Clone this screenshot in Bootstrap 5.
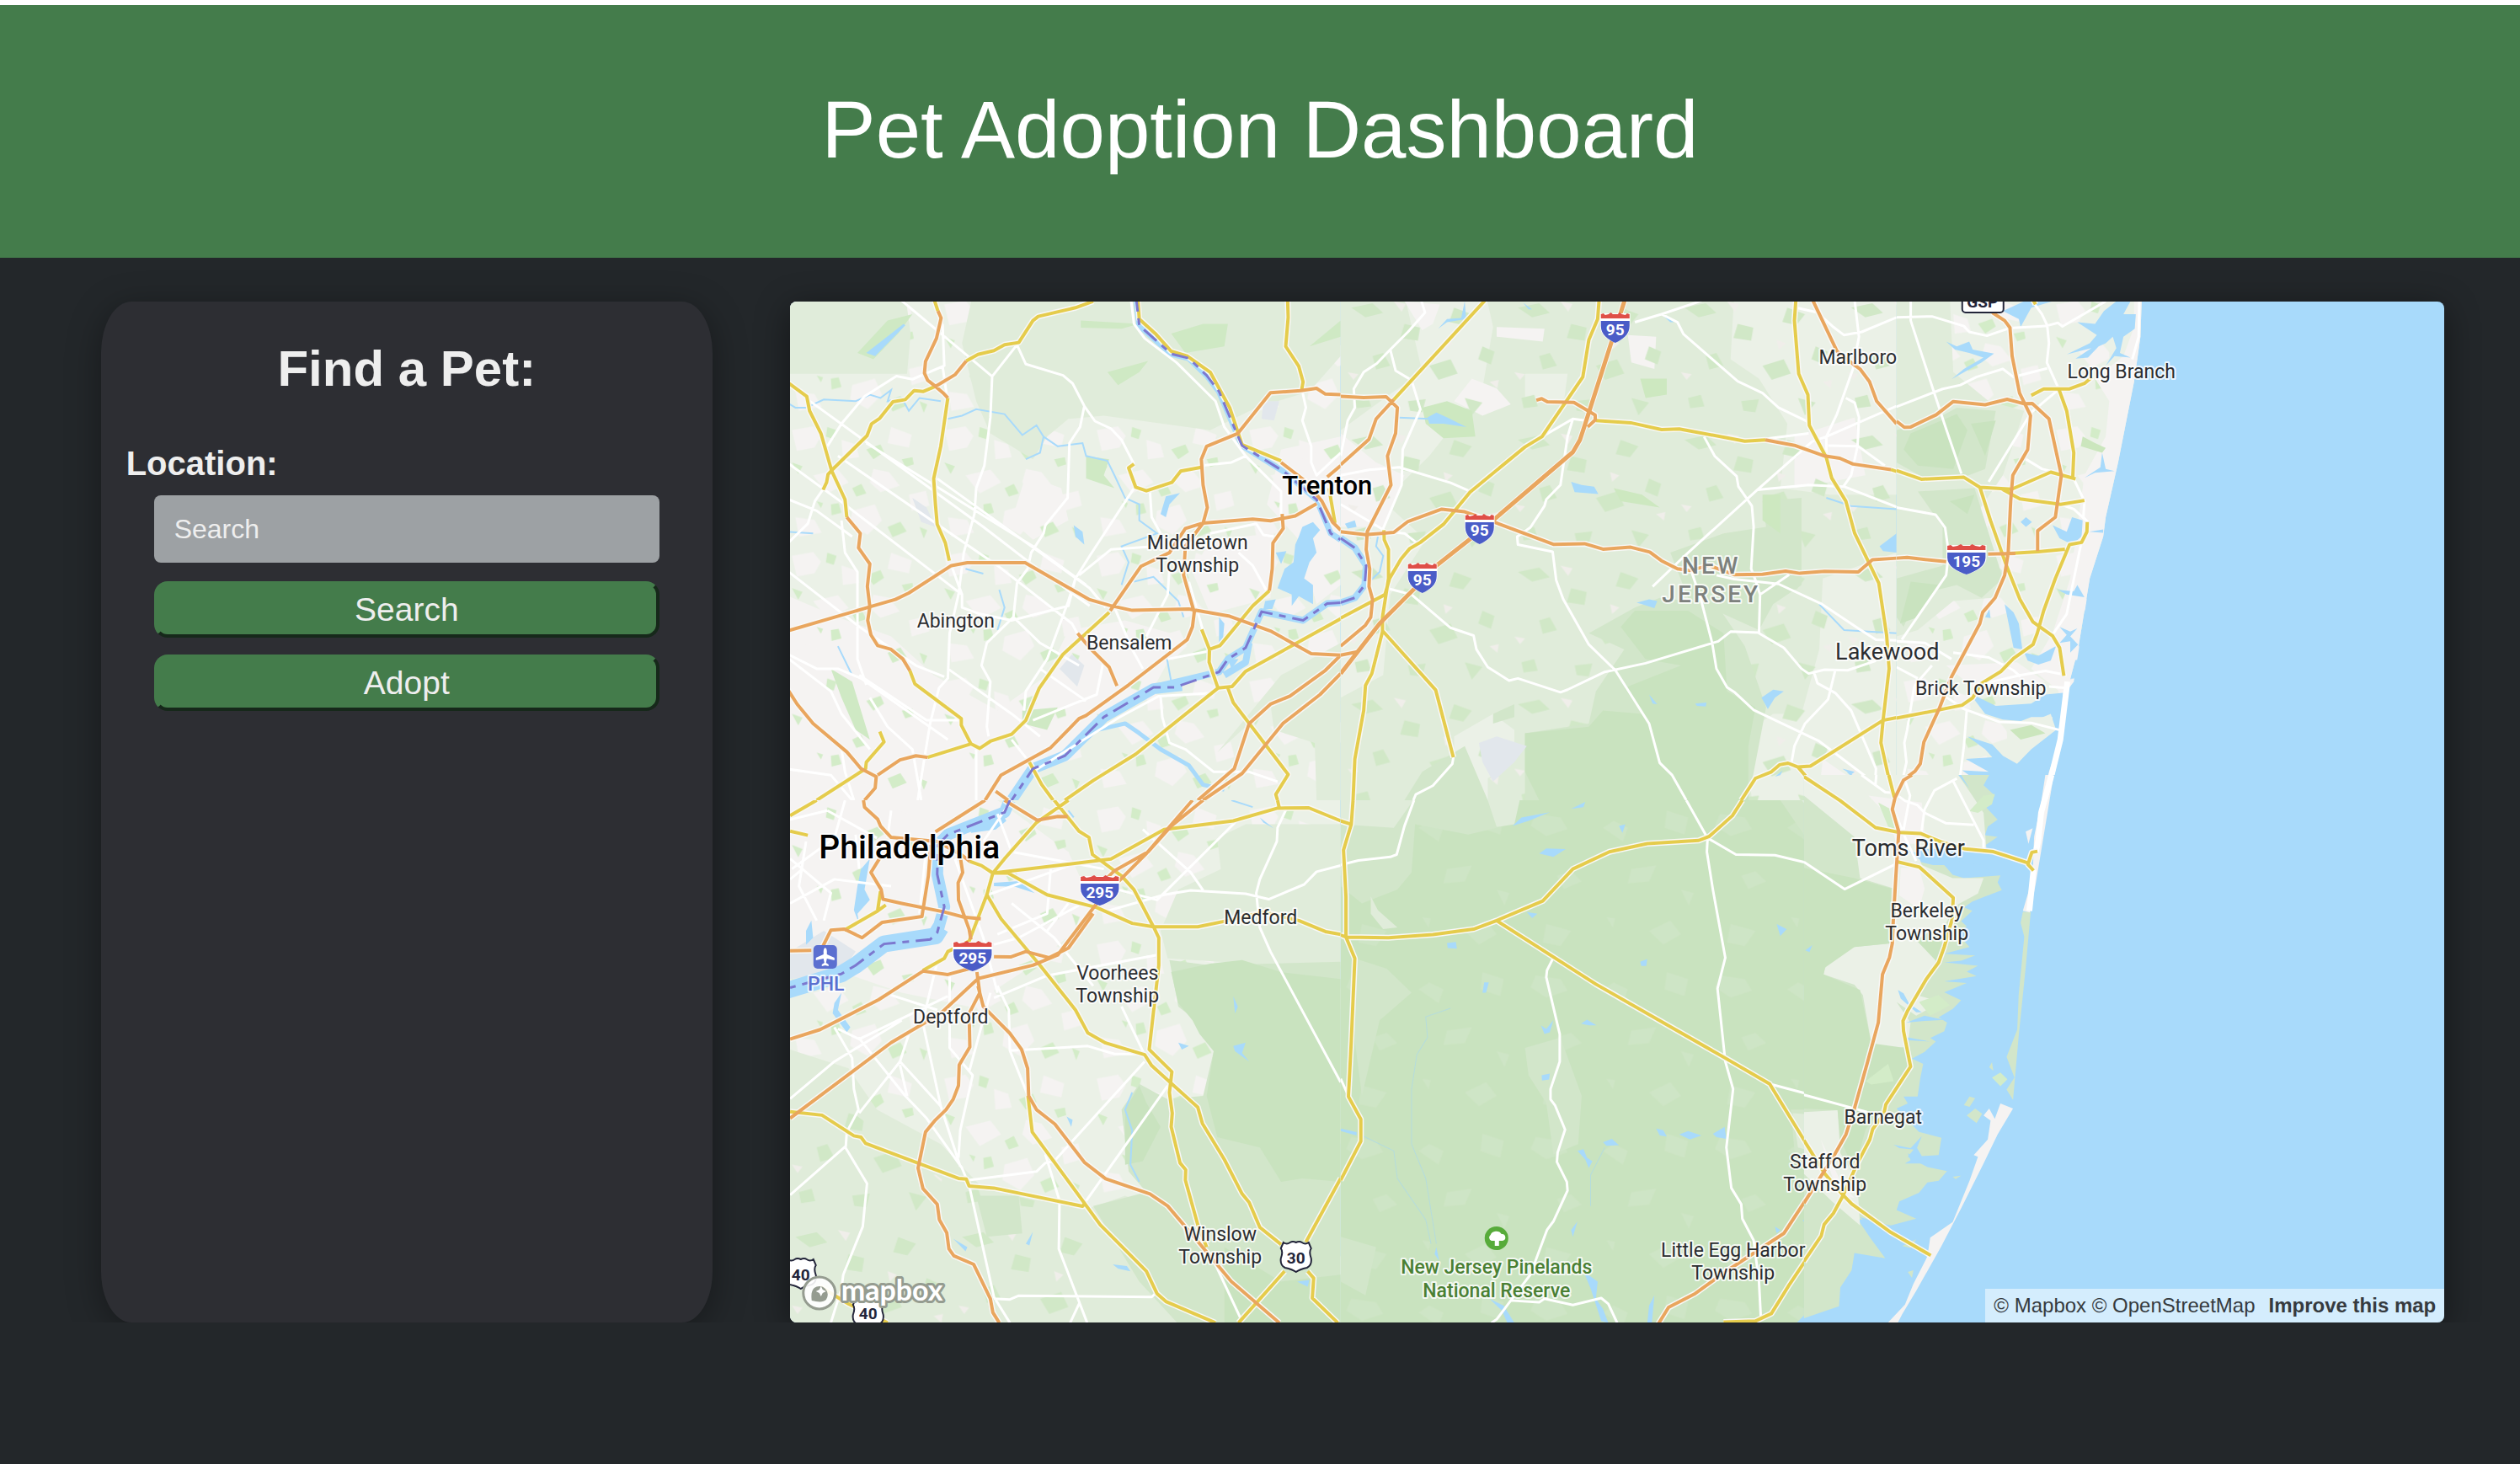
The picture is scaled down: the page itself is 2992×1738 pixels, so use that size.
<!DOCTYPE html>
<html lang="en">
<head>
<meta charset="utf-8">
<meta name="viewport" content="width=device-width, initial-scale=1">
<title>Pet Adoption Dashboard</title>
<link href="https://cdn.jsdelivr.net/npm/bootstrap@5.3.0/dist/css/bootstrap.min.css" rel="stylesheet">
<style>
  body { background: #23272a; color: #eee; font-family: "Liberation Sans", Arial, sans-serif; }
  .site-header { background: #447c4b; border-top: 6px solid #fff; padding: 90px 0 95px; }
  .site-title { font-size: 96px; line-height: 115px; font-weight: 400; color: #fff; }
  .dash { padding: 52px 3% 0 4%; gap: 3.3%; height: calc(100vh - 474px); min-height: 700px; }
  .find-panel { flex: 0 0 26.1%; background: #2d2e33; border-radius: 5%; padding: 44px 30px; box-shadow: 0 8px 40px rgba(0,0,0,.35); }
  .find-title { font-size: 60px; line-height: 72px; font-weight: 700; margin-bottom: 52px; }
  .find-label { font-size: 40px; line-height: 48px; font-weight: 700; margin-bottom: 14px; }
  .find-fields { padding: 0 33px; }
  .find-input, .find-input:focus { height: 80px; font-size: 32px; color: #eee; background: #9da1a4; border: 0; border-radius: 8px; padding: 0 24px; margin-bottom: 22px; }
  .find-input::placeholder { color: #eee; opacity: 1; }
  .find-btn { height: 67px; padding: 0; font-size: 39px; line-height: 56px; color: #eee; background: #447c4b; border: 4px solid #447c4b; border-right-color: #16281a; border-bottom-color: #16281a; border-radius: 16px; margin-bottom: 20px; }
  .find-btn:hover { background: #4d8a55; color: #fff; }
  .map-panel { flex: 1 1 0; background: #a8dafb; border-radius: 8px; box-shadow: 0 8px 40px rgba(0,0,0,.45); }
  .map-credit { right: 0; bottom: 0; height: 40px; padding: 0 10px; background: rgba(255,255,255,.5); font-size: 24px; line-height: 40px; white-space: nowrap; }
  .map-credit a { color: #363b3f; text-decoration: none; }
  .map-art path, .map-art polyline { vector-effect: non-scaling-stroke; }
  .lite { fill: #ebf1e7; } .field { fill: #e0ecda; } .scrub { fill: #d2e6ca; } .wood { fill: #c9e3bf; } .town { fill: #f5f3f2; }
  .park { fill: #d3ecc8; } .grey { fill: #e2e7ec; } .lake { fill: #a8dafb; }
  .brook { fill: none; stroke: #a8dafb; stroke-width: 2; }
  .river { fill: none; stroke: #a8dafb; stroke-linejoin: round; }
  .street { fill: none; stroke: #fff; stroke-width: 3; stroke-linejoin: round; }
  .edge { fill: none; stroke: #f8f8f6; stroke-width: 7; stroke-linejoin: round; }
  .major { fill: none; stroke: #e5cc4c; stroke-width: 4; stroke-linejoin: round; }
  .motor { fill: none; stroke: #e9a65e; stroke-width: 4; stroke-linejoin: round; }
  .border-line { fill: none; stroke: #7c78cf; stroke-width: 3; stroke-dasharray: 20 8 8 8; }
  .names { font-family: Roboto, sans-serif; font-size: 23px; fill: #2b2d30; text-anchor: middle; paint-order: stroke; stroke: #fff; stroke-opacity: .8; stroke-width: 4px; stroke-linejoin: round; }
  .mid-name { font-size: 27px; } .city { font-size: 31px; font-weight: 500; fill: #000; } .metro { font-size: 39px; font-weight: 500; fill: #000; }
  .state { font-size: 28px; font-weight: 500; fill: #7d817d; letter-spacing: 3px; } .reserve { fill: #4a8033; font-weight: 500; } .airport { fill: #5b6fd0; font-weight: 500; }
  .num { font: 700 19px Roboto, sans-serif; fill: #fff; text-anchor: middle; } .num-us { fill: #23253a; }
  .wordmark { font: 700 34px Lato, sans-serif; fill: #fff; stroke: #959c90; stroke-width: 6px; stroke-linejoin: round; paint-order: stroke; }
</style>
<script src="https://cdn.jsdelivr.net/npm/bootstrap@5.3.0/dist/js/bootstrap.bundle.min.js" defer></script>
</head>
<body>
<header class="site-header text-center">
  <h1 class="site-title m-0">Pet Adoption Dashboard</h1>
</header>
<main class="dash d-flex">
  <section class="find-panel">
    <h2 class="find-title text-center">Find a Pet:</h2>
    <form>
      <label class="find-label d-block" for="location">Location:</label>
      <div class="find-fields">
        <input class="form-control find-input" id="location" type="text" placeholder="Search">
        <button class="btn find-btn d-block w-100" type="button">Search</button>
        <button class="btn find-btn d-block w-100" type="button">Adopt</button>
      </div>
    </form>
  </section>
  <section class="map-panel position-relative overflow-hidden">
    <svg class="map-art d-block w-100 h-100" viewBox="936 358 1965 1212" preserveAspectRatio="xMidYMid slice" role="img" aria-label="Map of central New Jersey">
      <defs>
        <pattern id="suburb" width="430" height="390" patternUnits="userSpaceOnUse">
          <path class="town" d="M20,30l60,-12 22,30 -18,36 -50,10zM160,60l40,14 10,40 -46,6zM300,20l58,24 -8,40 -60,-14zM80,170l70,-18 30,40 -60,34zM250,150l44,10 30,42 -54,20 -30,-30zM350,230l48,-12 10,46 -50,16zM30,300l54,8 20,40 -64,12zM190,280l64,-20 20,50 -40,44 -50,-30z"/>
          <path class="park" d="M120,20l26,10 -8,28 -22,-8zM230,90l40,-16 10,24 -30,22zM20,130l30,12 -12,24zM190,210l26,-14 14,30 -28,10zM330,120l30,-6 4,22 -24,8zM130,260l22,-4 8,30 -28,8zM290,330l36,-16 18,30 -40,18zM380,330l22,10 -10,26zM90,250l18,6 -6,16z"/>
        </pattern>
        <pattern id="farm" width="470" height="410" patternUnits="userSpaceOnUse">
          <path fill="#d1e8c7" d="M30,40l60,-14 30,30 -50,14zM180,90l44,12 -6,40 -50,-8zM320,40l50,20 -24,34 -40,-10zM90,190l30,-10 20,40 -40,12zM250,220l60,-20 20,44 -54,20zM400,160l34,16 -10,40 -36,-16zM40,320l36,-10 10,36 -40,6zM190,330l50,-6 -10,40 -34,-4zM350,320l50,14 -30,40z"/>
          <path fill="#f0eeea" d="M150,20l34,8 -12,24zM290,140l26,10 -20,20zM20,240l30,6 -14,18zM420,270l26,-6 -4,26z"/>
        </pattern>
        <pattern id="pine" width="520" height="470" patternUnits="userSpaceOnUse">
          <path class="scrub" d="M30,40l70,10 20,34 -60,20 -44,-30zM220,80l30,-20 40,20 -14,40zM400,30l60,20 -10,50 -56,-20zM90,220l40,-14 30,30 -50,22zM300,200l70,-10 -20,46 -60,6zM440,260l36,10 -14,36zM60,360l70,20 -30,44 -50,-10zM230,340l24,4 -6,26zM350,380l60,-30 30,40 -50,30z"/>
        </pattern>
        <symbol id="interstate" viewBox="0 0 36 36" preserveAspectRatio="none">
          <path fill="#fff" d="M0,1h36v14c0,11 -8,17 -18,21C8,32 0,26 0,15z"/>
          <path fill="#df4f47" d="M1,7V2l3,-1 2,2 4,-1 3,-2 2,2h6l2,-2 3,2 4,1 2,-2 3,1v5z"/>
          <path fill="#4a5cc7" d="M1,10h34v6c0,10 -8,16 -17,20C9,32 1,26 1,16z"/>
        </symbol>
        <symbol id="us-route" viewBox="0 0 40 38">
          <path fill="#fff" stroke="#23253a" stroke-width="2" d="M5,2q4,3 8,0q3,-2 7,0q4,-2 7,0q4,3 8,0l3,7q-3,4 0,12q1,8 -5,11q-9,2 -13,5q-4,-3 -13,-5q-6,-3 -5,-11q3,-8 0,-12z"/>
        </symbol>
      </defs>

      <!-- North-west: Philadelphia suburbs to Trenton -->
      <svg x="930" y="350" width="660" height="600" viewBox="0 0 1568 1568" preserveAspectRatio="none">
        <defs>
          <path id="a-major" d="M870,20L820,40 715,67 700,80 660,148 620,155 590,173 545,185 512,205M425,284L390,300 365,297 340,325 305,332 268,383 245,400 232,437 132,545 122,557 118,582 108,605M0,265L62,315 70,360 102,430 132,545 170,635 175,690M423,0L423,20 432,50M460,320L440,470 420,570 425,650 430,712 453,770 464,825M353,1166L367,1207 498,1315 498,1335 525,1393 550,1407 580,1385 640,1363 680,1320 718,1220 785,1115 915,985M403,1435L525,1393M268,1355L280,1387 230,1450 228,1470 90,1568M995,0L1000,75 1045,120 1090,175 1135,190 1200,240 1255,350 1290,465 1400,515M1418,0L1420,70 1413,160 1450,222 1462,270 1458,295M985,525L970,537 990,597 1020,608 1092,582 1117,547 1175,535M1367,918L1320,965 1228,1088 1198,1100 1176,1038M1198,1100L1197,1140 1222,1220 1262,1215 1300,1168 1568,1005M1222,1220L990,1425 870,1507 790,1568M1250,1220L1265,1265 1420,1488 1385,1550 1390,1568M690,1450L725,1520 757,1568M1535,600L1552,708"/>
          <path id="a-motor" d="M432,50L441,72 428,135 397,207 394,243 403,265 425,284 448,306 460,320M425,284L480,248 512,205M0,1045L240,968 312,945 350,925 470,840 515,831 678,831 858,945 918,964 980,979 1140,975 1255,997 1370,1043 1485,1113 1568,1118M175,690L213,740 208,785 240,835 233,905 240,968 234,1010 243,1055 262,1088 300,1100 333,1130 353,1166M0,1210L35,1270 80,1330 175,1418 215,1470 258,1495 255,1530 225,1568M262,1490L325,1443 370,1430 403,1435M1568,310L1525,308 1500,290 1455,297 1370,304 1278,430 1190,470 1175,510 1180,590 1192,660 1180,708 1130,725 1085,800 1005,842 918,980M1180,708L1320,696 1370,701 1440,686 1500,648M1180,708L1130,780 1125,870 1155,985 1150,1030 1135,1070 970,1210 850,1305 830,1315 750,1405 610,1490 565,1568M1403,680L1406,725 1377,770 1375,850 1367,918M826,1050L860,1095 915,1155 937,1213M1400,520L1465,575 1515,640 1545,705 1568,730M1530,565L1568,530M1568,1118L1525,1165 1425,1245 1370,1270 1310,1330 1268,1470 1165,1568M1568,1175L1510,1240 1405,1330 1290,1485 1180,1568M595,1540L630,1568"/>
        </defs>
        <path class="lite" d="M0,0H1568V1568H0z"/>
        <path class="town" d="M0,930L150,1000 300,1060 420,1180 600,1290 740,1180 800,1040 960,1010 1120,1060 1050,1200 800,1400 620,1568H0zM680,560L780,600 800,700 700,760 640,700zM1200,760L1380,740 1370,940 1200,990 1150,860zM1400,480L1568,440V900L1500,960 1450,760 1360,650z"/>
        <path fill="url(#suburb)" d="M0,0H1568V1568H0z"/>
        <path class="field" d="M0,0H340L355,120 345,245 0,245zM530,0H1568V190L1480,300 1330,350 1200,420 900,375 800,385 740,440 700,510 580,430 540,330 500,150zM1220,1420L1400,1180 1568,1080V1568H1500L1495,1390 1380,1350 1370,1270z"/>
        <path fill="#cfe9c4" d="M205,180L290,80 360,60 320,120 250,200zM835,80L1000,90 950,105 835,102zM1090,120L1180,90 1250,90 1240,160 1130,180zM910,240L1025,205 1000,240 940,280zM1480,160L1568,80V130zM850,500L915,510 900,560 930,600 850,570zM130,1160L190,1200 240,1380 200,1350 160,1250zM670,1290L770,1280 740,1350 670,1330z"/>
        <path class="grey" d="M360,630L400,660 425,720 385,705zM775,1160L810,1115 845,1150 825,1215zM1350,330L1395,330 1380,390 1345,385z"/>
        <path class="brook" d="M0,330L30,350 60,350 110,325 200,330 240,310 270,320 300,295 290,330 330,320 350,360 380,320 440,330M460,385L500,375 540,355 620,370 670,435 710,405 730,440 720,490 680,510M730,440L770,470 840,460 850,500 910,515 930,560 960,630 1000,650 1000,700 1050,740 950,780 970,830 950,900M985,890L1040,875 1110,950 1125,1000M510,850L560,865M605,915L620,970 600,1040M0,735L80,740M150,1090L190,1180M1075,1110L1090,1200"/>
        <path class="lake" d="M230,180L335,90 340,95 255,190zM815,715L840,735 845,775 820,750zM1060,680L1075,625 1115,615 1085,650 1075,690zM1460,720L1490,705 1510,730 1490,755 1500,800 1480,830 1465,880 1490,900 1490,960 1450,935 1430,965 1430,930 1390,910 1410,850 1435,830 1440,775 1450,750zM1385,800L1415,795 1400,835zM1355,950L1385,945 1375,975 1350,975zM1225,1000L1240,1020 1235,1080 1225,1080zM1250,1130L1280,1130 1260,1160z"/>
        <path class="river" stroke-width="7" d="M990,0L1000,95 1090,183 1140,197 1190,250 1225,300 1275,430 1290,468 1410,550 1500,635 1540,740 1568,760"/>
        <path class="river" stroke-width="8" d="M1568,955L1530,958 1462,1010 1345,983 1330,1020 1300,1095 1250,1130 1225,1170 1040,1218M1310,1080L1300,1140 1240,1180"/>
        <path class="river" stroke-width="13" d="M1120,1212L1040,1222 900,1310 790,1430 700,1470 640,1568"/>
        <path class="river" stroke-width="5" d="M880,1350L960,1330 1000,1360 1060,1410 1140,1460 1180,1520 1240,1535"/>
        <path class="street" d="M310,0L585,253 655,155 680,215 785,250 812,275 845,345 875,392 920,415 950,450 985,525M585,253L580,380 563,530 540,600 535,680 505,800 490,930 465,1050 460,1190 435,1220 410,1330 395,1430 375,1568M845,345L833,410 803,460 798,630 735,715 730,740 695,800 685,850 655,895 645,1000 570,1080 555,1150 580,1200 570,1340 575,1370M0,515L175,655 500,930M65,325L560,720 690,830 860,965M150,500L600,840 810,1020 830,1060M0,630L90,670 190,750M0,850L210,1030 370,1150 450,1185M430,570L860,910 905,970M230,460L700,780 850,900M445,90L450,220 360,262 315,252 225,315 160,400 120,470M445,220L458,320M985,600L860,810 820,880 800,950 740,1130 680,1230 675,1290M830,870L920,790 1050,780M1030,610L1035,690 1060,740M975,0L985,90 1015,135 1105,210 1215,330 1240,410 1300,500 1400,610 1400,680M1175,530L1260,520 1300,500M1460,300L1470,350 1460,390 1485,470 1485,520 1500,560 1568,490M0,1110L90,1160 150,1160 215,1190 460,1380M240,1250L290,1340 360,1410 385,1568M1080,1130L1200,1105M1215,1235L1055,1245 945,1310 700,1480M1060,1245L1065,1310 1085,1390 1130,1410 1210,1480 1310,1480 1390,1510M160,1410L170,1480 195,1568M470,840L500,930 500,970 550,990 640,1010 800,965 820,880M110,600L85,640 65,710 0,780M160,700L170,800 205,860 205,1130 230,1210M645,1000L720,1080 830,1150M460,1160L640,1300 720,1370M720,1160L850,1260M500,1320L400,1320 210,1180M1085,850L1080,930 1020,1060M930,970L980,1100 1010,1160M1140,890L1195,1100M0,1470L130,1490 190,1568M640,1380L690,1450M540,1410L540,1568M1200,740L1330,710 1350,745 1380,750M1280,800L1320,840 1360,920M900,1130L880,1240 700,1320M0,1120L130,1230 160,1300 240,1410"/>
        <use href="#a-major" class="edge"/><use href="#a-motor" class="edge"/>
        <use href="#a-major" class="major"/><use href="#a-motor" class="motor"/>
        <path class="border-line" d="M990,0L1000,95 1090,183 1140,197 1190,250 1225,300 1275,430 1290,468 1410,550 1500,635 1540,740 1568,760M1568,955L1530,958 1462,1010 1345,983 1330,1020 1300,1095 1250,1130 1225,1170 1100,1218 1040,1218 900,1310 790,1430 700,1470 640,1568"/>
      </svg>

      <!-- North: Trenton to Freehold -->
      <svg x="1590" y="350" width="660" height="600" viewBox="0 0 1568 1568" preserveAspectRatio="none">
        <defs>
          <path id="b-major" d="M415,0L405,20 150,325M730,0L725,75 700,140 683,255 568,440 520,472 365,612 290,712 225,768 195,787 170,820 138,880 125,930 0,1003M122,730L123,760 135,790 135,880 118,1000 118,1045 88,1175 70,1212 65,1290 40,1440 35,1568M118,1042L268,1226 318,1435M720,390L818,397 905,418 955,416 1140,454 1198,450M1285,0L1280,80 1292,245 1318,310 1322,405 1370,505 1385,568 1425,640 1450,740 1518,895 1540,1055 1547,1160 1530,1320 1524,1390 1560,1568M1568,1312L1530,1320 1325,1462 1290,1465 1262,1453 1238,1458 1215,1480 1170,1500 1130,1568M1290,1465L1315,1497 1410,1568M1552,542L1568,548"/>
          <path id="b-motor" d="M0,315L65,319 128,316 160,350 155,430 132,500 142,590 75,735 72,790 82,850 80,905 90,945 85,1000 70,1025 0,1090M150,325L100,385 80,448 0,527M0,735L70,744 150,737 190,703 285,665 350,673 440,708 600,774 688,772 740,789 818,783 872,798 905,825 950,850 985,855 1040,840 1110,868 1190,867 1255,857 1295,864 1365,858 1460,860 1500,822 1568,817M552,327L567,322 583,332 658,334 718,373 718,388 697,410M1198,450L1280,467 1365,500 1408,507 1445,525 1552,542M1325,0L1333,20 1400,175 1440,210 1465,230 1492,270 1512,330 1568,400M0,1118L45,1108"/>
          <path id="b-turnpike" d="M806,0L760,160 690,400 675,450 655,488 440,690 380,745 270,840 205,915 110,1020 0,1175"/>
        </defs>
        <path class="field" d="M0,0H1568V1568H0z"/>
        <path class="lite" d="M180,0H410L430,100 400,290 250,500 120,640 240,760 140,930 120,1180 0,1250V420L150,300 230,240zM1110,0H1568V620L1380,620 1240,600 1260,400 1180,260 1100,200zM520,245L640,245 630,330 520,330zM1360,880L1568,800V1568H1160L1140,1360 1220,1300 1300,1300 1350,1100zM320,1370L430,1300 490,1350 490,1450 415,1500 415,1568H380L320,1480z"/>
        <path class="town" d="M0,430L100,520 180,560 120,720 0,720zM320,330L370,260 440,290 480,340 400,375zM440,100L575,105 570,145 440,130zM810,125L890,130 885,230 820,210zM1280,440L1450,380 1480,560 1280,600zM180,20L280,30 260,90 230,110zM1360,1440L1440,1500 1400,1568 1350,1540z"/>
        <path fill="url(#farm)" d="M0,0H1568V1568H0z"/>
        <path class="scrub" d="M700,1050L830,970 900,940 1060,960 1140,1090 1200,1280 1150,1568H520V1360L700,1330 720,1230 800,1100zM230,1480L350,1400 415,1568H180zM430,1300L490,1270 490,1310 430,1330z"/>
        <path class="wood" d="M790,1030L830,980 980,980 1080,1050 1090,1230 1170,1280 1150,1400 1150,1568H560L520,1480V1360L700,1340 740,1290 850,1300 800,1220 960,1150 860,1130z"/>
        <path class="scrub" d="M1190,640L1300,630 1300,900 1220,960 1180,1040 1100,1000 980,940 930,800 1080,740 1200,720z"/>
        <path fill="#cde8c0" d="M230,350L300,330 370,360 380,440 290,445 240,400zM1190,620L1240,620 1240,740 1190,700zM845,260L920,260 920,310 860,320zM770,600L850,620 900,660 790,640z"/>
        <path class="grey" d="M390,1390L440,1370 525,1400 490,1450 430,1510 400,1450z"/>
        <path class="lake" d="M245,380L270,365 300,380 355,410 290,400 250,400zM650,580L680,590 715,595 727,618 660,612zM905,60L940,85 930,85zM515,25L540,45 530,45zM275,105L300,75 340,72 350,20 354,75 300,85zM1520,780L1568,740V800L1530,795zM835,955L870,945 893,950 885,972 850,960zM1187,1250L1220,1225 1250,1230 1225,1250 1205,1285zM870,1240L893,1270 880,1268zM1000,1268L1032,1265 1030,1277 1005,1275zM1415,1470L1450,1480 1440,1488zM1225,1495L1247,1475 1240,1490zM12,710L40,700 45,720 20,725z"/>
        <path class="brook" d="M150,380L250,385M1370,630L1440,655 1568,665M1350,960L1420,1040 1568,1050M105,750L100,780 120,810 110,860 85,885M1430,1480L1520,1568"/>
        <path class="river" stroke-width="8" d="M0,755L40,785 72,840 68,900 40,940 0,955"/>
        <path class="street" d="M228,20L238,55 190,115 140,170 102,213 65,240 37,292 40,350 20,390 0,500M140,170L155,235 200,265 225,355 175,480 172,590 120,725M0,650L130,735 180,740 215,770M0,560L80,543 165,535 310,583 370,612M1060,0L1000,25 905,60 830,85M905,60L950,85 967,122 1120,268 1190,305 1235,350 1320,395M568,440L655,385 690,390M655,385L640,440 620,590 580,635 575,655 535,722 498,750 500,775 598,797 608,885 628,945 700,1085 775,1165 870,1330 900,1452 935,1490 975,1568M1025,440L1055,500 1117,563 1122,595 1160,655 1165,720 1158,850 1170,885 1183,930 1180,1050 1250,1095 1300,1160 1320,1175 1365,1163 1430,1165 1510,1135M1198,447L1320,430M1330,455L1175,605 975,805 880,905M1175,605L1320,590 1420,595 1568,658M990,860L1015,940 1048,1080 1060,1160 1090,1218 1110,1232 1165,1288 1350,1385 1500,1510 1540,1545M130,910L200,930 310,1033 375,1057 383,1100 415,1155 475,1197 500,1190 620,1233 640,1225 745,1170 860,1143 1065,1075 1100,1045 1180,1048M1060,870L1110,882 1235,897 1355,958 1460,1035 1510,1070 1568,1072M1183,930L1265,868M1448,0L1462,130 1445,230 1400,370 1370,440 1370,500M1285,40L1345,55 1390,100 1420,125 1470,115 1568,70M1330,455L1370,440 1568,345M1375,468L1460,470 1535,530M1425,320L1450,335 1462,380 1458,470 1440,560 1418,595M1395,1165L1375,1255 1310,1330 1280,1400 1272,1450M1335,1170L1345,1205 1395,1235 1440,1290 1510,1470 1508,1510M318,1435L315,1455 260,1523 212,1550 205,1568"/>
        <use href="#b-major" class="edge"/><use href="#b-motor" class="edge"/><use href="#b-turnpike" class="edge"/>
        <use href="#b-major" class="major"/><use href="#b-motor" class="motor"/><use href="#b-turnpike" class="motor" style="stroke-width:5px"/>
        <path class="border-line" d="M0,755L40,785 72,840 68,900 40,940 0,955"/>
      </svg>

      <!-- North-east: the shore -->
      <svg x="2250" y="350" width="660" height="600" viewBox="0 0 1568 1568" preserveAspectRatio="none">
        <defs>
          <path id="c-major" d="M0,545L70,572 190,566 235,597 325,603 435,550 505,571M497,570L500,490 480,360 458,293M380,312L415,292 488,292 530,275 552,255M298,603L348,633 463,650 530,638M235,597L265,700 310,840 348,945 385,1015 440,1058 460,1095 472,1182M538,705L537,735 522,768 488,775 448,880 415,980 397,1050 385,1085 330,1128 295,1168 240,1205 215,1250 185,1273 110,1290 0,1313M320,802L400,797 475,789M383,10L392,30"/>
          <path id="c-motor" d="M270,55L305,80 320,102 326,190 347,305 378,375 370,480 328,560 322,640 315,800 305,870 278,940 243,985 235,1020 155,1185 120,1285 77,1388 67,1455 52,1478 22,1502 0,1555M0,392L22,411 40,410 112,372 160,331 250,341 312,324 360,338 383,337 430,385 465,560 448,690 398,732 398,795M0,817L30,815 140,828M258,804L335,802"/>
        </defs>
        <path class="lite" d="M0,0H692L688,130 670,270 625,520 590,690 583,750 545,880 512,1100 488,1200 470,1360 430,1568H0z"/>
        <path fill="url(#suburb)" d="M0,0H600L600,500 500,1200 400,1350 180,1568H0z"/>
        <path class="field" d="M0,0H150L160,240 260,330 360,360 300,560 200,720 300,860 270,940 160,950 60,1040 0,1060z"/>
        <path class="scrub" d="M0,420L120,380 170,350 280,360 250,540 180,570 80,570 0,520zM60,610L220,600 300,880 240,940 170,900 60,930 20,1030 0,1000V880L130,840 130,720z"/>
        <path class="wood" d="M40,430L170,370 200,420 160,540 60,530 20,480zM210,400L280,390 250,500zM150,640L220,620 200,680zM40,890L120,900 60,1000 10,1020z"/>
        <path class="town" d="M692,0L688,130 670,270 625,520 590,690 583,750 545,880 512,1100 488,1200 470,1360 430,1568H410L440,1420 460,1230 380,1160 440,1050 490,880 530,560 590,440 600,330 560,260 640,190 670,100V0zM140,1150L340,1140 420,1200 240,1240z"/>
        <path class="lake" d="M510,85L560,90 585,50 620,20H660L640,60 675,60 672,105 640,130 630,180 660,195 615,190 590,220 620,165 610,130 590,150 570,160 540,195 505,198 550,165 480,185 545,150 565,125zM300,50L360,20H440L380,40 350,100 345,75zM140,145L170,160 205,145 215,170 275,182 240,210 155,262 190,230 245,195 205,180 165,170zM440,715L480,735 495,690 525,700 522,750 495,775 460,755zM350,705L365,690 382,705 365,720zM305,960L330,985 345,1020 355,1100 330,1095 318,1030zM250,1000L262,975 265,1003zM360,1110L400,1120 450,1090 435,1135 400,1147 370,1135zM530,568L575,535 580,490 590,540 615,547 560,552zM543,735L583,728 583,738zM455,915L500,920 510,900 530,938 480,930zM460,1030L490,1045 510,1035 490,1060 512,1085 490,1110 490,1075 460,1080 480,1055zM205,1235L280,1275 380,1268 420,1240 470,1235 463,1350 445,1430 430,1480 410,1568H175L190,1550 150,1500 230,1510 185,1475 260,1480 195,1440 270,1435 250,1410 200,1370 270,1395 300,1430 340,1455 380,1410 450,1350 435,1300 380,1325 300,1318 250,1300z"/>
        <path class="lite" d="M310,1340L380,1310 440,1310 435,1350 380,1400 345,1450 315,1430zM250,1562L270,1548 275,1560z"/>
        <path fill="#cbe6bd" d="M320,1350L380,1335 420,1360 350,1380zM525,440L560,460 590,475 580,490 520,470z"/>
        <path class="street" d="M0,70L100,67 190,97 205,115 255,127 320,103 420,97 455,87 468,98 590,20M40,0V80L105,300 135,400 183,555M0,347L130,292 180,280 225,255 300,230 330,255 425,228M390,30L410,60 425,95 430,150 424,210 458,293 380,365 260,580M365,510L410,540 440,548M500,571L530,640 527,690 540,705M463,650L500,665 535,700M520,775L480,990 440,1055M0,660L110,682 137,722 147,800 140,870 15,1070M0,1075L80,1080 155,1130M160,1110L260,1125 330,1165 350,1185M250,1205L350,1180 420,1167 480,1180M430,1215L480,1220M110,1225L190,1285 290,1325 380,1328 460,1350M50,1215L30,1350 22,1390 28,1450 20,1490 40,1550M198,1290L190,1400 180,1490 110,1540 90,1568M0,1155L60,1190M100,1150L60,1200 50,1215M685,0L683,130 665,200"/>
        <path class="street" style="stroke-width:7px" d="M482,1200L462,1380 420,1568"/>
        <use href="#c-major" class="edge"/><use href="#c-motor" class="edge"/>
        <use href="#c-major" class="major"/><use href="#c-motor" class="motor"/>
      </svg>

      <!-- South-west: Philadelphia to Winslow -->
      <svg x="930" y="950" width="660" height="640" viewBox="0 0 1568 1568" preserveAspectRatio="none">
        <defs>
          <path id="d-major" d="M15,45L90,0M15,90L65,102M168,378L262,322 285,305M262,320L270,265M800,0L710,65 620,170 587,212 570,275 520,410 460,440 450,460 390,495M760,0L830,90 858,108 868,158 950,220 985,260 1040,368 1055,400 1055,480 1028,725 1092,790 1085,850 1093,910 1090,950 1115,1055 1131,1075 1130,1105 1165,1235 1190,1300M522,178L555,190 587,212 920,171 1070,85 1265,60 1390,23 1478,22 1568,60M587,212L630,212 740,275 880,312 980,358 1040,368 1165,368 1250,350 1350,325 1450,350 1525,382 1568,390M570,275L610,345 720,480 820,610 855,677 905,706 1015,740 1035,772 1165,893 1178,940 1240,1045 1290,1145 1310,1170 1340,1242 1400,1292M1568,1100L1470,1285M1410,1370L1280,1520M1475,1370L1492,1390 1488,1448 1560,1520M15,906L105,916 195,976 215,980 228,998 490,1100 512,1102 520,1122 590,1128 840,1181 848,1170M686,860L698,965 890,1235 1020,1370 1050,1435 1075,1458 1215,1520M100,1415L180,1465 290,1520M1390,0L1395,23"/>
          <path id="d-motor" d="M222,0L225,20 262,55 270,75 300,108 430,120 500,160 522,178M565,0L425,92M270,165L243,210 272,260 277,288 330,300 450,325 505,340 553,345M412,130L405,220 387,338 275,355 218,400 168,375 130,378 105,430M15,438L75,437M495,165L502,210 489,240 490,290 520,375 525,405M620,0L712,58 770,47 798,48M1150,0L1020,155 880,300 770,450 700,480 540,520M1180,0L1090,75 1025,150 930,205 910,225M870,330L800,430 745,458 680,440 637,456 590,455M15,695L100,667 265,580 390,497 460,507 520,490M15,925L300,705 440,620 542,522M542,500L550,560 520,620 522,718 492,770 490,830 475,870 455,900 425,930 397,965 376,1070 390,1130 430,1175 436,1220 457,1258 463,1305 477,1325 533,1350 580,1450 587,1490 605,1520M545,540L560,600 635,678 668,725 685,780 688,860 710,900 762,942 845,1053 905,1101 1030,1145 1080,1180 1150,1265 1260,1400 1395,1520"/>
        </defs>
        <path class="lite" d="M0,0H1568V1568H0z"/>
        <path class="town" d="M0,0H600L800,150 880,330 700,480 520,600 330,560 160,500 0,420z"/>
        <path fill="url(#suburb)" d="M0,0H1568V1568H0z"/>
        <path class="field" d="M0,720L180,780 260,900 440,1000 560,1130 850,1190 960,1150 1200,1250V1568H0zM1220,110L1300,70H1568V480H1380L1080,460 1060,380 1110,260 1230,200z"/>
        <path fill="url(#farm)" d="M0,900L180,900 440,1100 850,1200V1568H0z"/>
        <path class="scrub" d="M1085,465L1200,480 1568,470V1568H1150L1000,1400 870,1180 1020,1140 970,1080 950,900 1000,825 1080,870 1180,860 1210,730 1160,640 1110,600zM540,1150L660,1150 670,1260 570,1270z"/>
        <path class="wood" d="M1090,500L1200,475 1290,465 1400,500 1568,520V1110L1460,1100 1400,1110 1340,1010 1220,980 1190,860 1210,730 1170,680 1150,640 1110,590zM960,900L1000,830 1020,880 1060,950 1010,1050 960,1060zM1240,1300L1400,1400 1568,1380V1568H1240z"/>
        <path class="grey" d="M15,440L110,380 200,440 160,500 15,520z"/>
        <path class="lake" d="M590,240L660,235 705,270 650,252 590,250zM205,250L215,200 240,170 225,260 240,290 205,330 210,360 195,320zM1110,705L1140,715 1120,725zM1265,715L1300,705 1290,735 1310,760 1270,730zM795,920L812,930 808,950zM925,1350L965,1355 975,1370 940,1362zM680,1290L700,1255 690,1295zM475,1275L515,1300 510,1312zM1265,570L1278,600 1270,620zM1340,50L1380,82 1350,65zM1445,1400L1480,1395 1475,1415zM60,380L75,350 80,400 60,420zM140,590L160,560 150,610 185,660 175,675 135,620zM540,50l70,-15 15,25 -30,25 -70,10z"/>
        <path class="brook" d="M980,850L960,900 980,960 975,1060 1000,1110M800,30L815,50M1260,0L1320,20"/>
        <path class="river" stroke-width="14" d="M635,0L620,35 460,100 432,130 430,215 450,310 430,385"/>
        <path class="river" stroke-width="20" d="M440,370L425,395 280,418 200,480 160,505 0,555"/>
        <path class="street" d="M1415,25L1390,80 1388,120 1340,230 1330,270 1340,370 1370,440 1568,820M1568,190L1500,208 1465,245 1365,288 1300,272 1145,262 1070,275 900,325M1010,85L1145,210 1180,262M1270,65L1050,290 940,260M15,1148L170,1008 232,1115 220,1240 165,1380 160,1420 130,1520M15,868L140,760 330,640M140,660L190,750 195,840 208,900 175,965 172,1008M208,690L340,860 400,925 500,1070 520,1120 590,1445 635,1520M390,650L440,890 495,1065M325,760L440,890M350,680L325,760 210,910M465,500V720L530,800 495,960 490,1040M520,790L580,560M325,770L345,860M520,1105L710,1080 735,1055 760,1050 1015,760M735,1030L775,1165 773,1305 853,1520M850,1165L1080,830M635,728L855,715 930,738 1010,738M600,540L632,610 635,728 690,870M590,1450L635,1452 660,1441 1035,1445 1050,1430M830,1465L805,1520M950,600L1015,740M1210,1340L1285,1505M150,665L210,695 460,570M15,170L130,270 110,350M60,120L40,250 90,350M120,30L260,110M15,300L140,230 300,250M170,0L140,110 20,200M400,130L380,330M480,170L560,400 600,560M600,40L640,150 900,200M640,300L760,400 870,540M600,390L740,330 750,200M560,280L830,180M430,470L390,640M280,560L430,610M590,575L740,510 1050,450M800,300L740,380M0,60L120,30M560,120L640,0M300,30L290,110M15,230L50,200M590,420L660,400 840,300M200,100L210,200"/>
        <use href="#d-major" class="edge"/><use href="#d-motor" class="edge"/>
        <use href="#d-major" class="major"/><use href="#d-motor" class="motor"/>
        <path class="border-line" d="M635,0L620,35 460,100 432,130 430,215 450,310 430,385 410,405 280,418 200,480 160,505 15,545"/>
      </svg>

      <!-- South: Pinelands -->
      <svg x="1590" y="950" width="660" height="640" viewBox="0 0 1568 1568" preserveAspectRatio="none">
        <defs>
          <path id="e-major" d="M0,60L30,70 8,145 15,280 15,398 40,460 30,700 22,862 57,928 57,992 0,1105M35,0L30,70M0,392L15,398 135,400 260,391 375,375 440,350 570,293 655,200 758,150 865,126 1010,117 1040,105 1105,45 1133,0M440,350L720,535 1085,750 1210,825 1320,1010M1320,1325L1265,1410 1215,1493 1170,1515 1080,1518"/>
          <path id="e-motor" d="M1320,1150L1250,1260 1080,1375 1000,1435 925,1475 895,1525"/>
        </defs>
        <path class="wood" d="M0,0H1568V1568H0z"/>
        <path fill="url(#pine)" fill-opacity=".6" d="M0,0H1568V1568H0z"/>
        <path class="scrub" d="M0,0H420L440,80 360,100 210,70 200,210 160,260 60,300 0,250zM40,460L130,490 200,560 110,640 60,860 40,700zM520,720L620,690 680,860 670,1000 600,1030 580,880 530,800zM1240,0H1400V200L1320,120zM1270,900L1400,900 1400,1060 1280,1020zM0,1270L100,1300 70,1440 0,1400z"/>
        <path class="field" d="M0,0H205L150,80 0,70zM415,0H505L490,70 440,78zM85,280L105,320 160,370 120,375 85,330zM1300,0H1400V120zM1275,910L1400,920V1040L1290,1010z"/>
        <path class="lake" d="M485,75L510,50 590,35 530,60zM650,25L690,5 685,20zM785,75L803,70 795,95zM560,155L580,140 635,142 600,165zM525,325L555,330 540,343zM300,415L325,412 328,432 302,430zM400,560L405,530 418,530 410,560zM565,655L580,665 600,640 590,675 575,680zM678,650L695,638 722,655 700,655zM567,800L590,795 588,812 568,815zM845,470L865,462 862,482 848,482zM890,955L910,960 920,978 900,975zM955,972L980,962 1018,975 985,987zM1050,970L1083,950 1088,985 1060,980zM740,995L765,985 785,1003 750,1005zM668,1020L685,1015 695,1040 710,1050 700,1070 690,1045zM1230,360L1258,375 1240,395zM1310,435L1325,420 1325,440zM0,955L45,965 45,975 0,962zM650,1250L668,1225 655,1270zM270,1300L278,1340 265,1320zM685,1370L725,1400 720,1450 740,1480 755,1520 735,1515 705,1420zM865,1520L870,1470 885,1440 878,1520zM420,1450L460,1470 490,1520H470L455,1485zM1225,1240L1240,1250 1230,1260zM1302,1222L1325,1218 1320,1235zM1240,1568L1320,1485V1568z"/>
        <path fill="none" stroke="#b5dcdc" stroke-width="1" d="M310,605L240,630 245,690 215,740 200,840 200,1000 240,1100 270,1290M60,975L150,1020 160,1100 240,1220 255,1290M745,1010L705,1090 705,1180"/>
        <path class="street" d="M207,0L180,75 158,158 140,165 50,175 0,188M975,0L1035,110 1033,150 1050,260 1085,458 1063,548 1085,760 1107,840 1088,1010 1102,1128 1130,1175 1133,1217 1165,1280 1180,1400 1185,1500M1035,110L1115,158 1225,160 1307,180 1420,260M598,462L582,495 580,515 618,680 618,760 592,840 592,870 605,888 633,958 612,1025 610,1052 638,1110 640,1135 600,1225 582,1250 535,1380 480,1455 440,1510 425,1520M480,1455L560,1460 575,1450 655,1468 735,1448 755,1465 780,1520M1210,825L1320,855M0,810L22,860"/>
        <use href="#e-major" class="edge"/><use href="#e-motor" class="edge"/>
        <use href="#e-major" class="major"/><use href="#e-motor" class="motor"/>
      </svg>

      <!-- South-east: Barnegat Bay and Long Beach Island -->
      <svg x="2140" y="920" width="300" height="650" viewBox="0 0 900 1592" preserveAspectRatio="none">
        <defs>
          <path id="g-major" d="M0,5L130,75 255,153 340,167 415,170 490,195 575,215 675,223 795,255M832,222L812,225 798,260 818,278M335,253L412,268 532,357 528,420 500,500 480,545 435,595 370,685 353,715 355,745 380,848 292,958 285,985 245,1030 235,1060 190,1130 140,1222 105,1275 72,1307 62,1340 0,1415M0,1062L75,1160 140,1222 170,1247 310,1330 452,1397M302,0L322,65"/>
          <path id="g-motor" d="M385,0L355,15 325,65 315,100 338,165 328,290 318,430 315,490 305,530 280,580 265,720 225,840 180,970 150,1045 105,1110 70,1155 0,1245"/>
        </defs>
        <path class="lake" d="M0,0H900V1592H0z"/>
        <path class="scrub" d="M0,0H550L590,40 560,0H660L640,30 680,60 650,95 690,130 655,150 645,175 690,180 645,205 640,225 500,205 400,215 400,250 460,262 500,262 530,290 570,300 700,292 690,312 705,335 640,355 600,368 570,385 600,395 560,425 580,440 545,460 590,500 500,520 610,525 560,540 500,545 620,555 580,572 615,585 500,600 580,605 500,632 560,655 530,680 480,705 510,720 500,745 450,765 470,775 430,805 385,825 425,840 415,880 405,935 355,935 370,955 330,970 410,1038 490,1055 480,1105 420,1108 400,1080 370,1110 440,1140 510,1152 480,1180 440,1185 410,1215 340,1240 330,1265 400,1290 310,1310 190,1290 240,1350 290,1405 180,1390 170,1440 130,1490 125,1545 0,1580z"/>
        <path class="lite" d="M0,0H550L600,60 640,110 650,215 400,215 420,262 530,300 640,300 620,345 540,380 500,440 480,520 440,600 400,640 490,660 400,700 330,660 380,720 370,790 270,800 240,780 210,640 180,610 70,580 90,520 180,500 300,490 320,330 200,300 180,180 0,60zM0,980L120,975 130,1100 190,1180 200,1310 100,1240 0,1160z"/>
        <path class="town" d="M230,60L420,80 430,170 400,200 330,200 300,120zM345,270L410,270 430,330 410,390 340,350zM60,1060L130,1180 180,1230 120,1220z"/>
        <path class="wood" d="M0,270L180,300 310,330 310,490 180,500 75,560 70,580 200,625 240,780 370,795 370,850 290,955 220,1030 180,1150 130,1060 120,975 0,970zM400,480L460,450 500,500 470,540z"/>
        <path class="park" d="M265,80L310,100 330,160 300,150zM590,105L640,60 680,55 670,85 620,110zM670,880L700,865 725,885 700,905zM410,660L480,640 520,670 450,700zM220,890L300,840 320,890 240,900z"/>
        <path class="lake" d="M335,625L355,635 375,665 420,690 400,690 345,650zM365,720L430,700 500,712 430,715zM350,770L450,775 360,762zM320,1075L380,1085 420,1050 400,1090 340,1085zM360,1130L380,1120 370,1100 420,1130zM200,1285L260,1300 310,1330 290,1345 230,1310zM370,220L440,235 640,262 670,290 560,292 500,262 420,250zM5,510L30,495 20,515z"/>
        <path class="scrub" d="M570,960L590,935 610,940 590,965zM580,990L610,970 635,985 615,1012zM660,850L670,835 675,860zM530,1168L560,1165 540,1175zM370,1445L390,1440 385,1462zM350,1370L400,1350 380,1375zM780,398H808L790,560 765,760 745,945 722,915 750,880 722,820 760,740 765,640 785,470 772,430z"/>
        <path class="town" d="M860,0H890L825,320 805,400 780,395 800,340 815,290 820,180 845,80zM790,165L815,155 800,200zM700,955L745,970 690,1045 640,1130 560,1260 490,1370 400,1500 350,1568 335,1592H300L360,1540 390,1480 440,1400 450,1345 530,1300 560,1240 590,1180 620,1110 605,1105 655,1060 665,1005 640,990 660,970 680,1000z"/>
        <path class="street" d="M205,0L290,50 320,52 360,75 405,88 430,110 505,140 605,145M530,15L640,190 640,215M545,10L465,45 430,100 418,170M362,20L378,60 355,160M325,110L365,190 400,250M258,0L255,28M0,253L145,332 325,260M0,930L225,980"/>
        <path class="street" style="stroke-width:7px" d="M882,0L845,110 835,190 826,225M818,275L803,395"/>
        <use href="#g-major" class="edge"/><use href="#g-motor" class="edge"/>
        <use href="#g-major" class="major"/><use href="#g-motor" class="motor"/>
      </svg>

      <g class="names">
        <text class="city" x="1574" y="587">Trenton</text>
        <text class="metro" x="1078" y="1019">Philadelphia</text>
        <text class="mid-name" x="2239" y="783">Lakewood</text>
        <text class="mid-name" x="2264" y="1016">Toms River</text>
        <text class="state" x="2030" y="681">NEW</text><text class="state" x="2030" y="715">JERSEY</text>
        <text x="1420" y="652">Middletown</text><text x="1420" y="679">Township</text>
        <text x="1133" y="745">Abington</text><text x="1339" y="771">Bensalem</text>
        <text x="2204" y="432">Marlboro</text><text x="2517" y="449">Long Branch</text><text x="2350" y="825">Brick Township</text>
        <text x="2286" y="1089">Berkeley</text><text x="2286" y="1116">Township</text>
        <text x="2234" y="1334">Barnegat</text>
        <text x="2165" y="1387">Stafford</text><text x="2165" y="1414">Township</text>
        <text x="2056" y="1492">Little Egg Harbor</text><text x="2056" y="1519">Township</text>
        <text x="1447" y="1473">Winslow</text><text x="1447" y="1500">Township</text>
        <text x="1325" y="1163">Voorhees</text><text x="1325" y="1190">Township</text>
        <text x="1127" y="1215">Deptford</text><text x="1495" y="1097">Medford</text>
        <text class="reserve" x="1775" y="1512">New Jersey Pinelands</text><text class="reserve" x="1775" y="1540">National Reserve</text>
        <text class="airport" x="979" y="1176">PHL</text>
      </g>
      <rect x="964" y="1122" width="28" height="28" rx="5" fill="#5b6fd0"/>
      <path fill="#fff" d="M978,1125q2,1 2,4v4l9,4v3l-9,-2 -1,5 3,2v2l-4,-1 -4,1v-2l3,-2 -1,-5 -9,2v-3l9,-4v-4q0,-3 2,-4z"/>
      <circle cx="1775" cy="1470" r="14" fill="#57ab3a"/>
      <path fill="#fff" d="M1773,1479v-6h-4a4,4 0 0 1 -1,-7a7,6 0 0 1 13,-1a4,4 0 0 1 1,8h-4v6z"/>
      <use href="#interstate" x="1898" y="371" width="36" height="36"/><text class="num" x="1916" y="398">95</text>
      <use href="#interstate" x="1737" y="610" width="36" height="36"/><text class="num" x="1755" y="636">95</text>
      <use href="#interstate" x="1669" y="668" width="36" height="36"/><text class="num" x="1687" y="695">95</text>
      <use href="#interstate" x="2309" y="646" width="48" height="36"/><text class="num" x="2333" y="673">195</text>
      <use href="#interstate" x="1280" y="1039" width="48" height="36"/><text class="num" x="1304" y="1066">295</text>
      <use href="#interstate" x="1129" y="1117" width="48" height="36"/><text class="num" x="1153" y="1144">295</text>
      <use href="#us-route" x="1517" y="1473" width="40" height="38"/><text class="num num-us" x="1537" y="1500">30</text>
      <use href="#us-route" x="929" y="1493" width="40" height="38"/><text class="num num-us" x="949" y="1520">40</text>
      <use href="#us-route" x="1009" y="1540" width="40" height="38"/><text class="num num-us" x="1029" y="1566">40</text>
      <rect x="2328" y="340" width="49" height="31" rx="4" fill="#fff" stroke="#23253a" stroke-width="2"/><text class="num num-us" x="2352" y="365">GSP</text>
      <g>
        <circle cx="971" cy="1535" r="19" fill="#fff" fill-opacity=".9" stroke="#959c90" stroke-width="3"/>
        <path fill="#959c90" d="M962,1544c-1,-8 0,-12 3,-15a10,10 0 0 1 14,14c-3,3 -9,3 -17,1z"/>
        <path fill="#fff" d="M973,1527l2,4 4,2 -4,2 -2,4 -2,-4 -4,-2 4,-2z"/>
        <text class="wordmark" x="997" y="1544">mapbox</text>
      </g>
    </svg>
    <div class="map-credit position-absolute d-flex gap-3">
      <span><a href="#">© Mapbox</a> <a href="#">© OpenStreetMap</a></span>
      <a class="fw-bold" href="#">Improve this map</a>
    </div>
  </section>
</main>
</body>
</html>
